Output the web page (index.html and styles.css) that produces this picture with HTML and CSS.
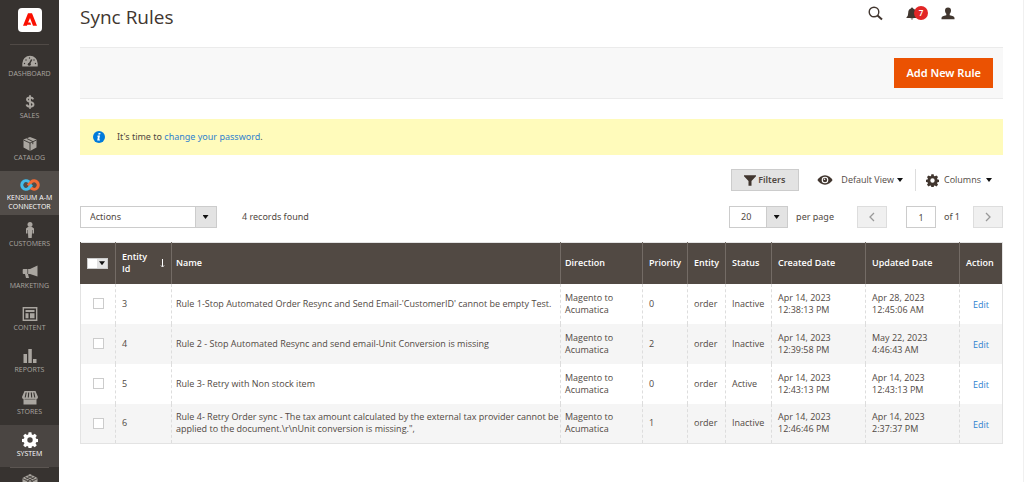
FILE: index.html
```html
<!DOCTYPE html>
<html lang="en">
<head>
<meta charset="utf-8">
<meta name="viewport" content="width=device-width, initial-scale=1">
<title>Sync Rules</title>
<link rel="stylesheet" href="styles.css">
</head>
<body>
<div class="app">
  <nav class="menu" aria-label="Main menu">
    <a class="logo" href="#" aria-label="Home">
      <svg width="24" height="24" viewBox="0 0 24 24"><rect width="24" height="24" rx="4" fill="#fff"/><path d="M5 17.800 10 5.200h4l5 12.600h-4L12 10l-1.900 4.600h2.200l.9 2.200H9.300l-.4 1z" fill="#fa0f00"/></svg>
    </a>
    <a class="item" href="#">
      <svg width="16" height="12" viewBox="0 0 16 12"><path d="M.3 11.500V8.500a7.700 7.700 0 0 1 15.400 0v3z" fill="currentColor"/><path d="M9.700 4.500 7 9.500" stroke="#373330" stroke-width="1.500"/><circle cx="7.300" cy="9.200" r="1.500" fill="#373330"/><g fill="#373330"><circle cx="2.500" cy="8.500" r=".7"/><circle cx="4" cy="5" r=".7"/><circle cx="7.500" cy="3" r=".7"/><circle cx="12" cy="5" r=".7"/><circle cx="13.500" cy="8.500" r=".7"/></g></svg>
      <span>DASHBOARD</span></a>
    <a class="item" href="#">
      <svg width="16" height="14" viewBox="0 0 16 14"><path d="M11.300 4.300C10.800 3 9.500 2.500 8 2.500c-1.800 0-3 .8-3 2.100 0 3.200 6.500 1.300 6.500 4.900 0 1.400-1.400 2.200-3.400 2.200-1.900 0-3.200-.7-3.600-2.200M8 .3v13.400" fill="none" stroke="currentColor" stroke-width="1.900"/></svg>
      <span>SALES</span></a>
    <a class="item" href="#">
      <svg width="16" height="14" viewBox="0 0 16 14"><path d="m8 0 6.500 2.500v8L8 14l-6.500-3.500v-8z" fill="currentColor"/><path d="m1.500 3 6.500 3 6.500-3M8 6v8M4.800 1.500l6 3v2.700" fill="none" stroke="#373330" stroke-width=".9"/></svg>
      <span>CATALOG</span></a>
    <a class="item current two-line" href="#">
      <svg width="20" height="12" viewBox="0 0 20 12"><path d="M10.300 8.200 8.700 9.400A4.300 4.300 0 1 1 8.700 2.600L10.300 3.900" fill="none" stroke="#45bce9" stroke-width="3"/><path d="m8 6.600 3.300-3.700a4.200 4.200 0 1 1 0 6.300L10 8.200" fill="none" stroke="#f26b35" stroke-width="3"/><path d="m8.300 9.600 3.700-3.800" stroke="#45bce9" stroke-width="2.800"/></svg>
      <span>KENSIUM A-M CONNECTOR</span></a>
    <a class="item tall-icon" href="#">
      <svg width="16" height="16" viewBox="0 0 16 16"><circle cx="8" cy="2.500" r="2.500" fill="currentColor"/><path d="M6 5h4l2 1.500v5h-1.500V8H10v3l-.3 5H6.300L6 11V8h-.5v3.500H4v-5z" fill="currentColor"/></svg>
      <span>CUSTOMERS</span></a>
    <a class="item" href="#">
      <svg width="16" height="14" viewBox="0 0 16 14"><path d="M15.500.5v11L8 9H6l1 4H4L3 9H1.500Q.7 9 .7 8V5q0-1 .8-1H8z" fill="currentColor"/><path d="M5.700 4v5" stroke="#373330" stroke-width=".7"/></svg>
      <span>MARKETING</span></a>
    <a class="item" href="#">
      <svg width="16" height="14" viewBox="0 0 16 14"><path d="M1.300.8h13.400v12.400H1.300z" fill="none" stroke="currentColor" stroke-width="1.400"/><path d="M3.500 3h9v2h-9zM3.500 6.200h3v5h-3zM8 6.200h4.500v5H8z" fill="currentColor"/></svg>
      <span>CONTENT</span></a>
    <a class="item" href="#">
      <svg width="16" height="14" viewBox="0 0 16 14"><path d="M1.500 5H5v9H1.500zM6.300 0h3.500v14H6.300zM11 10h3.500v4H11z" fill="currentColor"/></svg>
      <span>REPORTS</span></a>
    <a class="item" href="#">
      <svg width="16" height="14" viewBox="0 0 16 14"><path d="M2.500 0h11L16 6q0 2-1.500 2v5.500h-13V8Q0 8 0 6z" fill="currentColor"/><path d="M4.200 1.500 3.200 6.500M6.700 1.500l-.4 5M9.300 1.500l.4 5M11.800 1.500l1 5" stroke="#373330" stroke-width="1.100"/><path d="M2.500 8.300h11" stroke="#373330" stroke-width=".5"/></svg>
      <span>STORES</span></a>
    <a class="item current system tall-icon" href="#">
      <svg width="16" height="16" viewBox="0 0 16 16"><use href="#gear"/></svg>
      <span>SYSTEM</span></a>
    <a class="item last" href="#" aria-label="Find partners and extensions">
      <svg width="18" height="16" viewBox="0 0 18 16"><path d="m9 0 7.500 4v8L9 16l-7.500-4V4z" fill="currentColor"/><path d="m1.500 4.500 7.500 4 7.500-4M9 8.500V16M4 3l8 4.300M14 3 6 7.300M6.500 1.600l7 3.800M11.500 1.600l-7 3.800" fill="none" stroke="#373330" stroke-width=".8"/></svg></a>
  </nav>

  <main class="page">
    <header class="header">
      <h1>Sync Rules</h1>
      <div class="tools">
        <button type="button" aria-label="Search"><svg width="15" height="15" viewBox="0 0 15 15"><circle cx="6" cy="6" r="4.800" fill="none" stroke="currentColor" stroke-width="1.400"/><path d="m9.500 9.500 4.500 4" stroke="currentColor" stroke-width="2"/></svg></button>
        <button type="button" class="bell" aria-label="Notifications, 7 unread"><svg width="12" height="13" viewBox="0 0 12 13"><path d="M6 .5a1 1 0 0 1 1 1q2.800.8 2.800 4.500 0 3 1.700 4.300v.7H.5v-.7Q2.200 9 2.200 6 2.200 2.300 5 1.500a1 1 0 0 1 1-1zM4.500 11.600h3Q6 13.300 4.500 11.600z" fill="currentColor"/></svg><span class="badge">7</span></button>
        <button type="button" aria-label="Account"><svg width="14" height="13" viewBox="0 0 14 13"><path d="M7 .5c2 0 3 1.200 3 3 0 1.600-.7 2.400-1.300 3.300v1.500c2.800.6 4.800 1.300 4.800 2.600v1.300H.5v-1.300C.5 9.600 2.500 8.900 5.300 8.300V6.800C4.700 5.900 4 5.100 4 3.500c0-1.800 1-3 3-3z" fill="currentColor"/></svg></button>
      </div>
    </header>

    <div class="actions-bar"><button type="button" class="primary">Add New Rule</button></div>

    <div class="notice">
      <svg width="12" height="12" viewBox="0 0 12 12"><circle cx="6" cy="6" r="6" fill="#007bdb"/><path d="M5.600 2.100h1.900l-.3 1.500H5.300zM4.600 4.600H7L6.200 8.400h.9l-.2 1H4.200l.7-3.600H4.300z" fill="#fff"/></svg>
      <p>It's time to <a href="#">change your password</a>.</p>
    </div>

    <div class="grid-tools">
      <button type="button" class="filters"><svg width="12" height="11" viewBox="0 0 12 11"><path d="M0 .3h12v1L7.500 6v4.700h-3V6L0 1.300z" fill="currentColor"/></svg>Filters</button>
      <button type="button" class="view"><svg width="16" height="10" viewBox="0 0 16 10"><path d="M8 .3C11.500.3 14 2.500 15.600 5 14 7.500 11.500 9.700 8 9.700S2 7.500.4 5C2 2.500 4.500.3 8 .3z" fill="currentColor"/><circle cx="8" cy="5" r="3.300" fill="#fff"/><circle cx="8" cy="5" r="2.200" fill="currentColor"/><circle cx="7.500" cy="4.200" r=".8" fill="#fff"/></svg><span>Default View</span><i class="arrow"></i></button>
      <button type="button" class="columns"><svg width="13" height="13" viewBox="0 0 16 16"><path id="gear" fill="currentColor" fill-rule="evenodd" d="M6.600.3h2.800l.4 2.100 1.200.5 1.800-1.200 2 2-1.200 1.800.5 1.200 2 .4v2.800l-2 .4-.5 1.200 1.200 1.800-2 2-1.800-1.200-1.200.5-.4 2.100H6.600l-.4-2.100-1.200-.5-1.800 1.200-2-2 1.200-1.800-.5-1.200-2-.4V7.100l2-.4.5-1.200-1.200-1.800 2-2L5 2.900l1.200-.5zM8 5.300a2.700 2.700 0 1 0 0 5.400 2.700 2.700 0 0 0 0-5.400z"/></svg><span>Columns</span><i class="arrow"></i></button>
    </div>

    <div class="grid-controls">
      <div class="select mass"><select aria-label="Actions"><option>Actions</option></select><i class="arrow"></i></div>
      <p class="found">4 records found</p>
      <div class="pager">
        <div class="select size"><select id="per-page"><option>20</option></select><i class="arrow"></i></div>
        <label for="per-page">per page</label>
        <button type="button" class="step prev" disabled aria-label="Previous page"><svg width="8" height="10" viewBox="0 0 8 10"><path d="M6 1 2 5l4 4" fill="none" stroke="currentColor" stroke-width="1.300"/></svg></button>
        <input id="page" class="current-page" type="text" value="1">
        <label for="page">of 1</label>
        <button type="button" class="step next" disabled aria-label="Next page"><svg width="8" height="10" viewBox="0 0 8 10"><path d="m2 1 4 4-4 4" fill="none" stroke="currentColor" stroke-width="1.300"/></svg></button>
      </div>
    </div>

    <table class="data">
      <colgroup><col class="c-check"><col class="c-id"><col><col class="c-direction"><col class="c-priority"><col class="c-entity"><col class="c-status"><col class="c-date"><col class="c-date"><col class="c-action"></colgroup>
      <thead>
        <tr>
          <th><div class="multi"><input type="checkbox" aria-label="Select all"><button type="button" aria-label="Selection options"><i class="arrow"></i></button></div></th>
          <th><div class="sorted"><span>Entity Id</span><svg width="5" height="9" viewBox="0 0 5 9"><path d="M2.500 0v7.500M1 6.500l1.500 1.500L4 6.500" fill="none" stroke="currentColor"/></svg></div></th>
          <th class="tight">Name</th><th class="tight">Direction</th><th>Priority</th><th>Entity</th><th>Status</th><th>Created Date</th><th>Updated Date</th><th>Action</th>
        </tr>
      </thead>
      <tbody>
        <tr><td><input type="checkbox" aria-label="Select 3"></td><td>3</td><td class="tight">Rule 1-Stop Automated Order Resync and Send Email-'CustomerID' cannot be empty Test.</td><td class="tight">Magento to Acumatica</td><td>0</td><td>order</td><td>Inactive</td><td class="date">Apr 14, 2023 12:38:13 PM</td><td class="date">Apr 28, 2023 12:45:06 AM</td><td><a href="#">Edit</a></td></tr>
        <tr><td><input type="checkbox" aria-label="Select 4"></td><td>4</td><td class="tight">Rule 2 - Stop Automated Resync and send email-Unit Conversion is missing</td><td class="tight">Magento to Acumatica</td><td>2</td><td>order</td><td>Inactive</td><td class="date">Apr 14, 2023 12:39:58 PM</td><td class="date">May 22, 2023 4:46:43 AM</td><td><a href="#">Edit</a></td></tr>
        <tr><td><input type="checkbox" aria-label="Select 5"></td><td>5</td><td class="tight">Rule 3- Retry with Non stock item</td><td class="tight">Magento to Acumatica</td><td>0</td><td>order</td><td>Active</td><td class="date">Apr 14, 2023 12:43:13 PM</td><td class="date">Apr 14, 2023 12:43:13 PM</td><td><a href="#">Edit</a></td></tr>
        <tr><td><input type="checkbox" aria-label="Select 6"></td><td>6</td><td class="tight">Rule 4- Retry Order sync - The tax amount calculated by the external tax provider cannot be applied to the document.\r\nUnit conversion is missing.",</td><td class="tight">Magento to Acumatica</td><td>1</td><td>order</td><td>Inactive</td><td class="date">Apr 14, 2023 12:46:46 PM</td><td class="date">Apr 14, 2023 2:37:37 PM</td><td><a href="#">Edit</a></td></tr>
      </tbody>
    </table>
  </main>
</div>
</body>
</html>
```
FILE: styles.css
```css
* { box-sizing: border-box; }
body { margin: 0; background: #fff; color: #514943; font: 9px/12px "Noto Sans", "Open Sans", sans-serif; }
h1, p { margin: 0; font-weight: 400; }
button, input, select { margin: 0; font: inherit; color: inherit; border-radius: 0; }
button { padding: 0; border: 0; background: none; }
svg { display: block; flex: none; }
a { color: #2f82cf; text-decoration: none; }

.app { display: flex; height: 100vh; overflow: hidden; }

.menu { flex: none; width: 59px; background: #373330; color: #aaa6a0; font-family: "Open Sans", sans-serif; }
.menu a { color: inherit; }
.logo { display: flex; justify-content: center; height: 45px; margin: 0 10px; padding-top: 8px; border-bottom: 1px solid #504a46; }
.item { display: flex; flex-direction: column; align-items: center; justify-content: flex-end; gap: 2px; height: 42px; padding-bottom: 9px; font-size: 7px; line-height: 9px; text-align: center; }
.tall-icon { gap: 1px; }
.menu .current { background: #524d49; color: #fff; }
.menu .two-line { height: 44px; padding-bottom: 4px; }
.menu .system { background: #4a4542; }
.last { justify-content: flex-start; height: 42px; margin: 0 10px; padding-top: 6px; border-top: 1px solid #5b5551; }

.page { flex: 1; min-width: 0; padding: 0 20px 0 21px; border-right: 1px solid #f0f0f0; }
.header { display: flex; justify-content: space-between; align-items: flex-start; height: 47px; padding-right: 48px; color: #41362f; }
h1 { padding-top: 5px; font-family: "Open Sans", sans-serif; font-size: 19px; line-height: 24px; }
.tools { display: flex; align-items: center; gap: 23px; padding-top: 6px; }
.bell { position: relative; }
.badge { position: absolute; top: -1px; left: 8px; width: 14px; height: 14px; border-radius: 7px; background: #e22626; color: #fff; font-size: 8px; font-weight: 600; line-height: 14px; text-align: center; }

.actions-bar { display: flex; justify-content: flex-end; padding: 10px; border: solid #ebebeb; border-width: 1px 0; background: #f8f8f8; }
.primary { height: 30px; padding: 0 12px; background: #eb5202; color: #fff; font-size: 11px; font-weight: 600; }
.notice { display: flex; align-items: center; gap: 12px; height: 36px; margin-top: 20px; padding: 0 13px; background: #fffbbb; }

.arrow { display: block; flex: none; width: 6px; height: 4px; background: #111; clip-path: polygon(0 0, 100% 0, 50% 100%); }
.grid-tools { display: flex; justify-content: flex-end; align-items: center; margin-top: 14px; }
.grid-tools button { display: flex; align-items: center; height: 22px; }
.grid-tools svg { color: #41362f; }
.grid-tools .filters { gap: 2px; padding: 0 13px 0 12px; border: 1px solid #ccc; background: #e3e3e3; font-weight: 600; }
.grid-tools .view { gap: 8px; padding: 0 12px 0 18px; }
.grid-tools .columns { gap: 5px; padding: 0 11px 0 10px; border-left: 1px solid #ddd; }
.view .arrow { margin-left: -5px; }
.view span, .columns span { font-family: "Open Sans", sans-serif; }

.grid-controls { display: flex; align-items: center; margin-top: 15px; }
.select { display: grid; grid-template-columns: 1fr 21px; align-items: center; height: 22px; border: 1px solid #ccc; background: linear-gradient(#ccc, #ccc) right 20px top / 1px 100% no-repeat, linear-gradient(#e3e3e3, #e3e3e3) right / 20px 100% no-repeat; }
.select select { grid-area: 1 / 1 / 2 / 3; width: 100%; height: 20px; padding: 0 9px; border: 0; appearance: none; background: none; }
.select .arrow { grid-area: 1 / 2; justify-self: center; pointer-events: none; }
.mass { width: 137px; }
.found { margin-left: 25px; }
.pager { display: flex; align-items: center; margin-left: auto; }
.size { width: 59px; margin-right: 8px; }
.size select { padding: 0 11px; }
.step { display: flex; align-items: center; justify-content: center; width: 30px; height: 22px; border: 1px solid #ddd; background: #f0f0f0; color: #999; }
.prev { margin: 0 19px 0 23px; }
.next { margin-left: 13px; }
.current-page { width: 30px; height: 22px; margin-right: 8px; padding: 0; border: 1px solid #ccc; background: #fff; text-align: center; }

.data { width: 100%; margin-top: 14px; table-layout: fixed; border-collapse: collapse; border: 1px solid #e3e3e3; font: 9px/12px "Open Sans", sans-serif; }
.c-check { width: 35px; }
.c-id { width: 56px; }
.c-direction { width: 82px; }
.c-priority { width: 45px; }
.c-entity { width: 38px; }
.c-status { width: 46px; }
.c-date { width: 94px; }
.c-action { width: 43px; }
.data th { height: 41px; padding: 0 0 0 6px; border-left: 1px solid #736b65; background: #514943; color: #fff; font-weight: 600; text-align: left; }
.data th:first-child { border-left-color: #514943; }
.data td { height: 40px; padding: 0 0 0 6px; border-left: 1px dashed #ddd; }
.data .tight { padding-left: 4px; }
.data .date { padding-right: 20px; }
.data tbody tr:nth-child(even) { background: #f5f5f5; }
.data td:first-child { padding: 0; border-left: 1px solid #e3e3e3; }
.data td:last-child { padding: 3px 0 0; text-align: center; }
.data input { display: block; width: 11px; height: 11px; margin: 0 auto; border: 1px solid #ccc; background: #fff; appearance: none; }
.data .multi { display: flex; width: 21px; height: 11px; border: 1px solid #ccc; background: #fff; }
.data .multi input { width: 9px; height: 9px; margin: 0; border: 0; }
.multi button { display: flex; flex: 1; align-items: center; justify-content: center; background: #e3e3e3; }
.sorted { display: flex; align-items: center; justify-content: space-between; padding-right: 6px; }
.sorted span { width: 30px; }
```
